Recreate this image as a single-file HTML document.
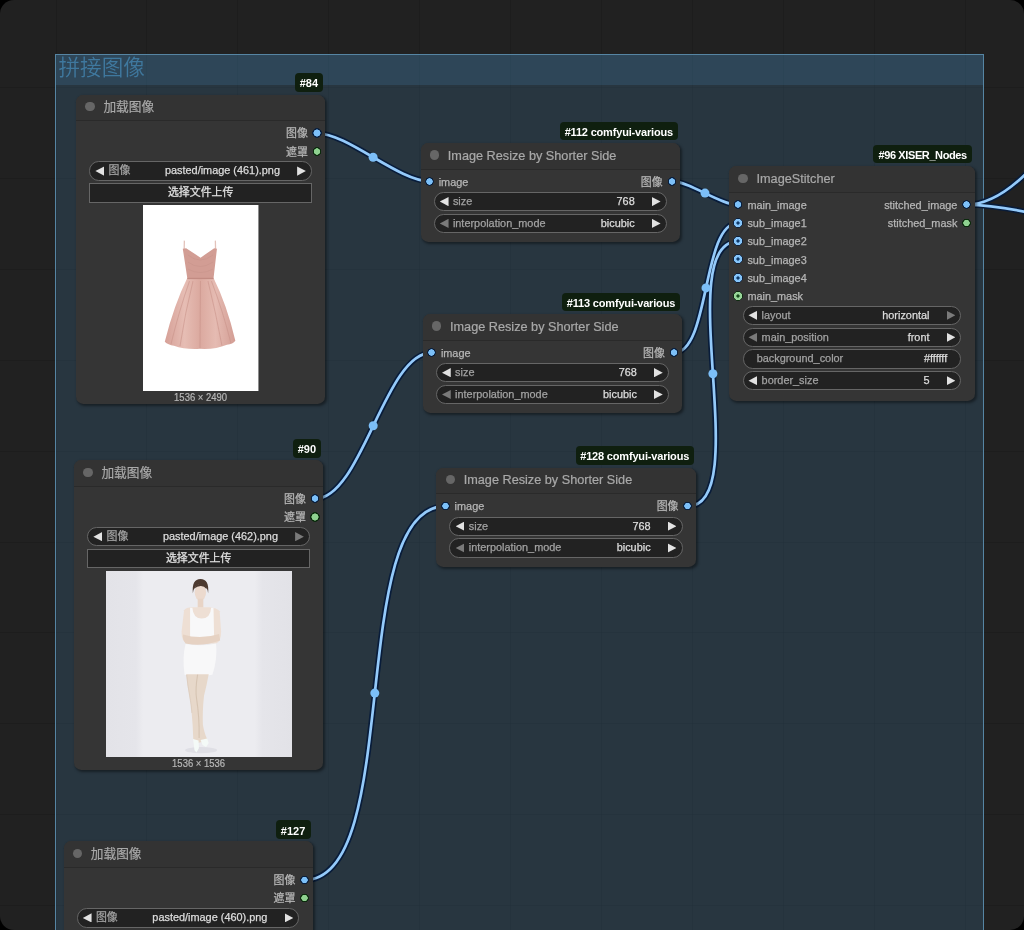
<!DOCTYPE html>
<html lang="zh"><head><meta charset="utf-8"><title>ComfyUI</title>
<style>
*{box-sizing:border-box;margin:0;padding:0}
html,body{width:1024px;height:930px;overflow:hidden;background:#000}
body{font-family:"Liberation Sans", "Noto Sans CJK SC", sans-serif;position:relative;-webkit-font-smoothing:antialiased}
#canvas{position:absolute;left:0;top:0;width:1024px;height:930px;background:#212121;border-radius:14px;overflow:hidden;transform:translateZ(0);will-change:transform}
.gl{position:absolute;background:rgba(0,0,0,.1)}
#group{position:absolute;left:54.5px;top:53.5px;width:929.8px;height:900px;background:rgba(65,119,161,.25);border:1px solid #5685a3}
#gtitle{position:absolute;left:0;top:0;width:100%;height:30px;background:rgba(65,119,161,.25)}
#gtext{position:absolute;left:3px;top:-1.2px;font-size:21.6px;line-height:30px;color:#3f789e;font-weight:350;white-space:nowrap}
.node{position:absolute;background:#353535;border-radius:7.3px;box-shadow:1.8px 1.8px 2.7px rgba(0,0,0,.42)}
.node .tb{position:absolute;left:0;top:0;width:100%;height:26.9px;background:#333;border-radius:7.3px 7.3px 0 0;border-bottom:1px solid #2a2a2a}
.node .dot{position:absolute;left:9.2px;top:7.4px;width:9.4px;height:9.4px;border-radius:50%;background:#666}
.node .tt{position:absolute;left:27.3px;top:0;height:26px;line-height:27px;font-size:12.7px;color:#a9a9a9;-webkit-text-stroke:.2px;white-space:nowrap}
.sl{position:absolute;font-size:10.9px;line-height:14px;color:#b6b6b6;-webkit-text-stroke:.25px;white-space:nowrap}
.sl.r{text-align:right}
.pt{position:absolute;width:9.4px;height:9.4px;border-radius:50%}
.pt.b{background:radial-gradient(circle closest-side,#7cc0f9 0,#7cc0f9 66%,#0a1f3d 76%,#0a1f3d 94%,rgba(10,31,61,0) 100%)}
.pt.g{background:radial-gradient(circle closest-side,#8ed18f 0,#8ed18f 66%,#0a2a0c 76%,#0a2a0c 94%,rgba(10,42,12,0) 100%)}
.pt.ob{width:10px;height:10px;margin:-.3px;background:radial-gradient(circle closest-side,#0f3a6a 0,#0f3a6a 27%,#86c5fa 37%,#86c5fa 80%,#0a1f3d 88%,#0a1f3d 95%,rgba(10,31,61,0) 100%)}
.pt.og{width:10px;height:10px;margin:-.3px;background:radial-gradient(circle closest-side,#154a1a 0,#154a1a 27%,#98d699 37%,#98d699 80%,#0a2a0c 88%,#0a2a0c 95%,rgba(10,42,12,0) 100%)}
.w{position:absolute;height:19.4px;background:#222;border:1px solid #666;border-radius:9.7px;font-size:10.9px;line-height:17.6px;color:#e2e2e2;white-space:nowrap;-webkit-text-stroke:.25px}
.w.btn{border-radius:0;text-align:center}
.w .l{position:absolute;left:calc(18.3px - var(--d,0px));top:0;color:#a2a2a2}
.w .l0{position:absolute;left:calc(13.4px - var(--d,0px));top:0;color:#a2a2a2}
.w .v{position:absolute;right:calc(31.1px - var(--d,0px));top:0;color:#ddd}
.w .v0{position:absolute;right:calc(13.4px - var(--d,0px));top:0;color:#ddd}
.w .al{position:absolute;left:calc(5.2px - var(--d,0px));top:4.1px;width:8.8px;height:9.2px;background:#e2e2e2;clip-path:polygon(100% 0,0 50%,100% 100%)}
.w .ar{position:absolute;right:calc(5.2px - var(--d,0px));top:4.1px;width:8.8px;height:9.2px;background:#e2e2e2;clip-path:polygon(0 0,100% 50%,0 100%)}
.w .dis{background:#7a7a7a}
.badge{position:absolute;height:18.4px;background:#0f1f0f;border-radius:4px;color:#fff;font-size:11px;font-weight:bold;line-height:18px;padding-top:1.2px;text-align:center;white-space:nowrap}
.dim{position:absolute;font-size:10.7px;color:#b8b8b8;text-align:center;line-height:12px;white-space:nowrap;transform:scaleX(.885);-webkit-text-stroke:.2px}
svg{position:absolute;left:0;top:0}
</style></head>
<body>
<div id="canvas">
<div class="gl" style="left:55.5px;top:0;width:1px;height:930px"></div>
<div class="gl" style="left:146.4px;top:0;width:1px;height:930px"></div>
<div class="gl" style="left:237.3px;top:0;width:1px;height:930px"></div>
<div class="gl" style="left:328.2px;top:0;width:1px;height:930px"></div>
<div class="gl" style="left:419.1px;top:0;width:1px;height:930px"></div>
<div class="gl" style="left:510.0px;top:0;width:1px;height:930px"></div>
<div class="gl" style="left:600.9px;top:0;width:1px;height:930px"></div>
<div class="gl" style="left:691.8px;top:0;width:1px;height:930px"></div>
<div class="gl" style="left:782.7px;top:0;width:1px;height:930px"></div>
<div class="gl" style="left:873.6px;top:0;width:1px;height:930px"></div>
<div class="gl" style="left:964.5px;top:0;width:1px;height:930px"></div>
<div class="gl" style="left:0;top:87.0px;width:1024px;height:1px"></div>
<div class="gl" style="left:0;top:177.9px;width:1024px;height:1px"></div>
<div class="gl" style="left:0;top:268.8px;width:1024px;height:1px"></div>
<div class="gl" style="left:0;top:359.7px;width:1024px;height:1px"></div>
<div class="gl" style="left:0;top:450.6px;width:1024px;height:1px"></div>
<div class="gl" style="left:0;top:541.5px;width:1024px;height:1px"></div>
<div class="gl" style="left:0;top:632.4px;width:1024px;height:1px"></div>
<div class="gl" style="left:0;top:723.3px;width:1024px;height:1px"></div>
<div class="gl" style="left:0;top:814.2px;width:1024px;height:1px"></div>
<div class="gl" style="left:0;top:905.1px;width:1024px;height:1px"></div>
<div id="group"><div id="gtitle"></div><div id="gtext">拼接图像</div></div>
<svg width="1024" height="930" viewBox="0 0 1024 930" fill="none">
<path d="M317.0 133.3 C347.5 133.3 398.8 181.2 429.3 181.2" stroke="#081c3a" stroke-width="6" stroke-linecap="butt"/>
<path d="M314.9 498.9 C361.7 498.9 384.8 352.7 431.6 352.7" stroke="#081c3a" stroke-width="6" stroke-linecap="butt"/>
<path d="M304.4 880.0 C404.3 880.0 345.3 506.2 445.2 506.2" stroke="#081c3a" stroke-width="6" stroke-linecap="butt"/>
<path d="M671.9 181.2 C689.5 181.2 720.4 205.0 738.0 205.0" stroke="#081c3a" stroke-width="6" stroke-linecap="butt"/>
<path d="M674.0 352.7 C710.2 352.7 701.8 223.0 738.0 223.0" stroke="#081c3a" stroke-width="6" stroke-linecap="butt"/>
<path d="M687.8 506.2 C755.2 506.2 670.6 241.4 738.0 241.4" stroke="#081c3a" stroke-width="6" stroke-linecap="butt"/>
<path d="M965.8 204.8 C1072.6 204.8 1153.2 -105.0 1260.0 -105.0" stroke="#081c3a" stroke-width="6" stroke-linecap="butt"/>
<path d="M965.8 204.8 C1202.9 204.8 1592.9 595.0 1830.0 595.0" stroke="#081c3a" stroke-width="6" stroke-linecap="butt"/>
<path d="M317.0 133.3 C347.5 133.3 398.8 181.2 429.3 181.2" stroke="#94cafa" stroke-width="2.7"/>
<path d="M314.9 498.9 C361.7 498.9 384.8 352.7 431.6 352.7" stroke="#94cafa" stroke-width="2.7"/>
<path d="M304.4 880.0 C404.3 880.0 345.3 506.2 445.2 506.2" stroke="#94cafa" stroke-width="2.7"/>
<path d="M671.9 181.2 C689.5 181.2 720.4 205.0 738.0 205.0" stroke="#94cafa" stroke-width="2.7"/>
<path d="M674.0 352.7 C710.2 352.7 701.8 223.0 738.0 223.0" stroke="#94cafa" stroke-width="2.7"/>
<path d="M687.8 506.2 C755.2 506.2 670.6 241.4 738.0 241.4" stroke="#94cafa" stroke-width="2.7"/>
<path d="M965.8 204.8 C1072.6 204.8 1153.2 -105.0 1260.0 -105.0" stroke="#94cafa" stroke-width="2.7"/>
<path d="M965.8 204.8 C1202.9 204.8 1592.9 595.0 1830.0 595.0" stroke="#94cafa" stroke-width="2.7"/>
<circle cx="373.1" cy="157.2" r="4.5" fill="#7cbff8"/>
<circle cx="373.2" cy="425.8" r="4.5" fill="#7cbff8"/>
<circle cx="374.8" cy="693.1" r="4.5" fill="#7cbff8"/>
<circle cx="705.0" cy="193.1" r="4.5" fill="#7cbff8"/>
<circle cx="706.0" cy="287.9" r="4.5" fill="#7cbff8"/>
<circle cx="712.9" cy="373.8" r="4.5" fill="#7cbff8"/>
</svg>
<div class="node" id="n84" style="left:76.1px;top:94.6px;width:249.1px;height:309.2px">
<div class="tb"></div><div class="dot" style="margin-left:0.0px"></div><div class="tt" style="margin-left:0.0px;margin-top:-1.0px">加载图像</div>
<div class="pt b" style="left:236.4px;top:33.8px"></div>
<div class="sl r" style="right:17.3px;top:31.8px">图像</div>
<div class="pt g" style="left:236.4px;top:52.0px"></div>
<div class="sl r" style="right:17.3px;top:50.0px">遮罩</div>
<div class="w" style="left:13.1px;top:66.8px;width:222.9px;--d:0.0px">
<div class="al"></div><div class="ar"></div><span class="l">图像</span><span class="v">pasted/image (461).png</span>
</div>
<div class="w btn" style="left:13.1px;top:88.6px;width:222.9px">选择文件上传</div>
<div style="position:absolute;left:67.2px;top:110.7px;width:115.5px;height:186.2px;overflow:hidden"><svg width="115.45" height="186.2" viewBox="0 0 115.5 186" preserveAspectRatio="none"><rect width="115.5" height="186" fill="#fff"/>
<defs><linearGradient id="dg" x1="0" x2="1" y1="0" y2="0"><stop offset="0" stop-color="#d6a097"/><stop offset=".28" stop-color="#e6bdb4"/><stop offset=".5" stop-color="#dba99f"/><stop offset=".72" stop-color="#e5bbb2"/><stop offset="1" stop-color="#d39d94"/></linearGradient></defs>
<path d="M41.4 35.6 L41.2 44 M72.4 35.6 L72.6 44" stroke="#e3c3bb" stroke-width="1.3" fill="none"/>
<path d="M39.8 43.6 L43.2 43.2 L57.6 52.6 L71.2 43.2 L74 43.6 L70.6 73 L44.3 73 Z" fill="#d29d94"/>
<path d="M44.3 73 L70.6 73 Q84 100 92.4 135.6 Q90 139 84 139.5 Q72 144.5 57 143.6 Q42 144.5 31 140.5 Q25 140 21.8 136.7 Q31 100 44.3 73 Z" fill="url(#dg)"/>
<path d="M44.3 73.4 L70.6 73.4" stroke="#c28b82" stroke-width="1.3"/>
<path d="M45 50 Q57 60 70 50 M45 57 Q57 66 70 57 M45 64 Q57 71 70 64" stroke="#c8938a" stroke-width=".8" fill="none" opacity=".7"/>
<path d="M50 76 Q42 108 37 141 M57.5 76 L57 143 M65 76 Q73 108 79 140.5 M46.5 76 Q36 106 28 139 M68.5 76 Q80 106 88 138" stroke="#c78f86" stroke-width="1" fill="none" opacity=".55"/>
</svg></div>
<div class="dim" style="left:0;width:249.1px;top:296.6px">1536 × 2490</div>
</div>
<div class="badge" style="left:294.7px;top:73.3px;width:28.5px;letter-spacing:0.00px">#84</div>
<div class="node" id="n90" style="left:74.1px;top:460.2px;width:249.1px;height:309.7px">
<div class="tb"></div><div class="dot" style="margin-left:0.0px"></div><div class="tt" style="margin-left:0.0px;margin-top:0.0px">加载图像</div>
<div class="pt b" style="left:236.4px;top:33.8px"></div>
<div class="sl r" style="right:17.3px;top:31.8px">图像</div>
<div class="pt g" style="left:236.4px;top:52.0px"></div>
<div class="sl r" style="right:17.3px;top:50.0px">遮罩</div>
<div class="w" style="left:13.1px;top:66.8px;width:222.9px;--d:0.0px">
<div class="al"></div><div class="ar dis"></div><span class="l">图像</span><span class="v">pasted/image (462).png</span>
</div>
<div class="w btn" style="left:13.1px;top:88.6px;width:222.9px">选择文件上传</div>
<div style="position:absolute;left:31.8px;top:110.7px;width:186.2px;height:186.2px;overflow:hidden"><svg width="186.2" height="186.2" viewBox="0 0 186 185" preserveAspectRatio="none"><defs><linearGradient id="wg" x1="0" x2="1" y1="0" y2="0"><stop offset="0" stop-color="#e3e3e8"/><stop offset=".16" stop-color="#e5e5ea"/><stop offset=".2" stop-color="#ececf0"/><stop offset=".8" stop-color="#ececf0"/><stop offset=".84" stop-color="#e5e5ea"/><stop offset="1" stop-color="#e2e2e7"/></linearGradient></defs><rect width="186" height="185" fill="url(#wg)"/>
<ellipse cx="95" cy="178" rx="16" ry="3" fill="#dfdfe5"/>
<path d="M86.8 22 Q85.5 8 94.4 8 Q103.3 8 102 22 Q101 14 94.4 13.5 Q88 14 86.8 22Z" fill="#4d3a30"/>
<ellipse cx="94.3" cy="21.2" rx="5.7" ry="8.3" fill="#ecdace"/>
<path d="M88.4 17.5 Q91 11.5 97 12.5 Q100 13.5 100.4 18 Q98 14.8 94.5 15 Q91 15 88.4 17.5Z" fill="#4d3a30"/>
<rect x="91.6" y="27.5" width="5.6" height="9" fill="#e8d4c6"/>
<path d="M78 39 Q80 36 86 36 L103 36 Q111 36.5 113.5 40 L115 60 Q115 70 110 72 L82 72 Q75 70 75.5 60Z" fill="#eedfd4"/>
<path d="M84 36.5 L86.3 36.5 Q87 47 95.5 47.3 Q104.5 47 105 36.5 L107.4 36.5 L108 66 L84 66Z" fill="#f8f8f9"/>
<path d="M77 63 Q94 68.5 113 62.5 L114 69 Q96 75.5 79.5 72 Q76 68 77 63Z" fill="#e6d2c3"/>
<path d="M79.5 72.5 Q94 75.5 110 72 Q111.5 88 106.3 103 Q93 105.5 78.5 103 Q76 86 79.5 72.5Z" fill="#f8f8f9"/>
<path d="M80.3 102.5 L102.6 102.5 Q100.5 114 97.9 124 Q96.2 140 96.8 153 Q98.5 162 101 167 L96 170 L91 171 L87.2 167 Q86.8 153 85.5 140 Q84.8 131 83.3 124 Q81 112 80.3 102.5Z" fill="#e7d8ca"/>
<path d="M91.5 103 Q89 118 90.5 127 Q93.5 146 93 166" stroke="#d2bfad" stroke-width="1.1" fill="none" opacity=".8"/>
<path d="M80.5 103 Q81.5 113 83.6 124 Q85.2 133 85.8 141" stroke="#dac9b9" stroke-width="1" fill="none" opacity=".7"/>
<path d="M87 167 L92.5 168.5 L92.8 176 L90.4 180.3 L88.4 178Z M94.5 168 L101 166.5 L102.6 171 L100 175 L96.5 173Z" fill="#f4faf7"/>
</svg></div>
<div class="dim" style="left:0;width:249.1px;top:296.6px">1536 × 1536</div>
</div>
<div class="badge" style="left:292.6px;top:439.2px;width:28.5px;letter-spacing:0.00px">#90</div>
<div class="node" id="n127" style="left:63.5px;top:841.4px;width:249.1px;height:310.2px">
<div class="tb"></div><div class="dot" style="margin-left:0.0px"></div><div class="tt" style="margin-left:0.0px;margin-top:0.0px">加载图像</div>
<div class="pt b" style="left:236.4px;top:33.8px"></div>
<div class="sl r" style="right:17.3px;top:31.8px">图像</div>
<div class="pt g" style="left:236.4px;top:52.0px"></div>
<div class="sl r" style="right:17.3px;top:50.0px">遮罩</div>
<div class="w" style="left:13.1px;top:66.8px;width:222.9px;--d:0.0px">
<div class="al"></div><div class="ar"></div><span class="l">图像</span><span class="v">pasted/image (460).png</span>
</div>
<div class="w btn" style="left:13.1px;top:88.6px;width:222.9px">选择文件上传</div>
</div>
<div class="badge" style="left:275.6px;top:820.4px;width:35.0px;letter-spacing:0.00px">#127</div>
<div class="node" id="n112" style="left:420.5px;top:142.9px;width:259.4px;height:99.2px">
<div class="tb"></div><div class="dot" style="margin-left:0.0px"></div><div class="tt" style="margin-left:0.0px;margin-top:0.0px">Image Resize by Shorter Side</div>
<div class="pt b" style="left:4.3px;top:33.8px"></div>
<div class="sl" style="left:18.2px;top:31.8px">image</div>
<div class="pt b" style="left:246.7px;top:33.8px"></div>
<div class="sl r" style="right:17.3px;top:31.8px">图像</div>
<div class="w" style="left:13.1px;top:49.0px;width:233.2px;--d:0.0px">
<div class="al"></div><div class="ar"></div><span class="l">size</span><span class="v">768</span>
</div>
<div class="w" style="left:13.1px;top:70.8px;width:233.2px;--d:0.0px">
<div class="al dis"></div><div class="ar"></div><span class="l">interpolation_mode</span><span class="v">bicubic</span>
</div>
</div>
<div class="badge" style="left:559.7px;top:121.6px;width:118.2px;letter-spacing:-0.18px">#112 comfyui-various</div>
<div class="node" id="n113" style="left:422.7px;top:314.0px;width:259.4px;height:99.2px">
<div class="tb"></div><div class="dot" style="margin-left:0.0px"></div><div class="tt" style="margin-left:0.0px;margin-top:0.0px">Image Resize by Shorter Side</div>
<div class="pt b" style="left:4.3px;top:33.8px"></div>
<div class="sl" style="left:18.2px;top:31.8px">image</div>
<div class="pt b" style="left:246.7px;top:33.8px"></div>
<div class="sl r" style="right:17.3px;top:31.8px">图像</div>
<div class="w" style="left:13.1px;top:49.0px;width:233.2px;--d:0.0px">
<div class="al"></div><div class="ar"></div><span class="l">size</span><span class="v">768</span>
</div>
<div class="w" style="left:13.1px;top:70.8px;width:233.2px;--d:0.0px">
<div class="al dis"></div><div class="ar"></div><span class="l">interpolation_mode</span><span class="v">bicubic</span>
</div>
</div>
<div class="badge" style="left:561.9px;top:292.7px;width:118.2px;letter-spacing:-0.18px">#113 comfyui-various</div>
<div class="node" id="n128" style="left:436.4px;top:467.5px;width:259.4px;height:99.2px">
<div class="tb"></div><div class="dot" style="margin-left:0.0px"></div><div class="tt" style="margin-left:0.0px;margin-top:-1.0px">Image Resize by Shorter Side</div>
<div class="pt b" style="left:4.3px;top:33.8px"></div>
<div class="sl" style="left:18.2px;top:31.8px">image</div>
<div class="pt b" style="left:246.7px;top:33.8px"></div>
<div class="sl r" style="right:17.3px;top:31.8px">图像</div>
<div class="w" style="left:13.1px;top:49.0px;width:233.2px;--d:0.0px">
<div class="al"></div><div class="ar"></div><span class="l">size</span><span class="v">768</span>
</div>
<div class="w" style="left:13.1px;top:70.8px;width:233.2px;--d:0.0px">
<div class="al dis"></div><div class="ar"></div><span class="l">interpolation_mode</span><span class="v">bicubic</span>
</div>
</div>
<div class="badge" style="left:575.6px;top:446.2px;width:118.2px;letter-spacing:-0.18px">#128 comfyui-various</div>
<div class="node" id="n96" style="left:729.2px;top:166.3px;width:245.5px;height:234.3px">
<div class="tb"></div><div class="dot" style="margin-left:0.0px"></div><div class="tt" style="margin-left:0.0px;margin-top:0.0px">ImageStitcher</div>
<div class="pt b" style="left:4.3px;top:33.8px"></div>
<div class="sl" style="left:18.2px;top:31.8px">main_image</div>
<div class="pt ob" style="left:4.3px;top:52.0px"></div>
<div class="sl" style="left:18.2px;top:50.0px">sub_image1</div>
<div class="pt ob" style="left:4.3px;top:70.2px"></div>
<div class="sl" style="left:18.2px;top:68.2px">sub_image2</div>
<div class="pt ob" style="left:4.3px;top:88.4px"></div>
<div class="sl" style="left:18.2px;top:86.4px">sub_image3</div>
<div class="pt ob" style="left:4.3px;top:106.5px"></div>
<div class="sl" style="left:18.2px;top:104.5px">sub_image4</div>
<div class="pt og" style="left:4.3px;top:124.7px"></div>
<div class="sl" style="left:18.2px;top:122.7px">main_mask</div>
<div class="pt b" style="left:232.8px;top:33.8px"></div>
<div class="sl r" style="right:17.3px;top:31.8px">stitched_image</div>
<div class="pt g" style="left:232.8px;top:52.0px"></div>
<div class="sl r" style="right:17.3px;top:50.0px">stitched_mask</div>
<div class="w" style="left:13.8px;top:139.3px;width:217.9px;--d:0.7px">
<div class="al"></div><div class="ar dis"></div><span class="l">layout</span><span class="v">horizontal</span>
</div>
<div class="w" style="left:13.8px;top:161.3px;width:217.9px;--d:0.7px">
<div class="al dis"></div><div class="ar"></div><span class="l">main_position</span><span class="v">front</span>
</div>
<div class="w" style="left:13.8px;top:182.9px;width:217.9px;--d:0.7px">
<span class="l0">background_color</span><span class="v0">#ffffff</span>
</div>
<div class="w" style="left:13.8px;top:204.7px;width:217.9px;--d:0.7px">
<div class="al"></div><div class="ar"></div><span class="l">border_size</span><span class="v">5</span>
</div>
</div>
<div class="badge" style="left:872.9px;top:144.8px;width:99.5px;letter-spacing:-0.39px">#96 XISER_Nodes</div>
</div>
</body></html>
